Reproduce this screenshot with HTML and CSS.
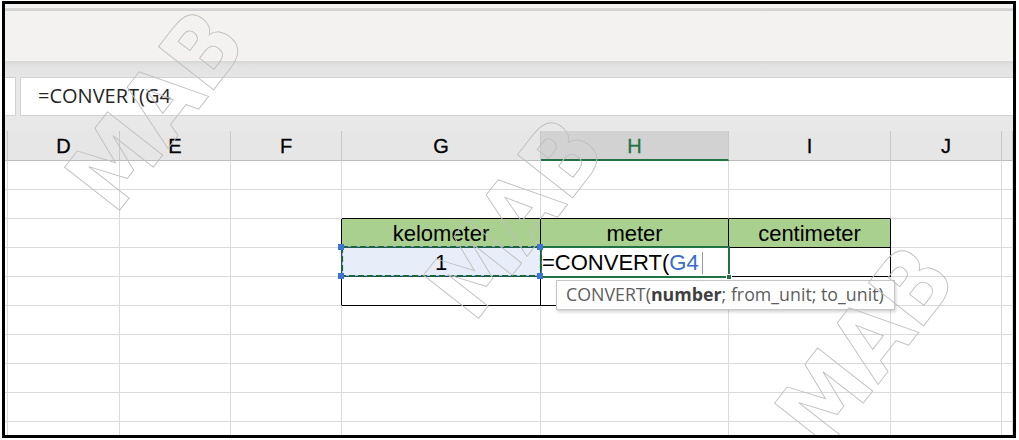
FILE: index.html
```html
<!DOCTYPE html>
<html>
<head>
<meta charset="utf-8">
<link rel="stylesheet" href="styles.css">
</head>
<body>
<div class="frame">
  <div class="ribbon"><div class="ribbon-rule"></div></div>
  <div class="band"></div>
  <div class="fbar">
    <div class="namebox"></div>
    <div class="finput">=CONVERT(G4</div>
  </div>
  <div class="gap"></div>
  <div class="grid">
    <div class="hd"></div><div class="hd">D</div><div class="hd">E</div><div class="hd">F</div><div class="hd">G</div><div class="hd on">H</div><div class="hd">I</div><div class="hd">J</div><div class="hd"></div>

    <div></div><div></div><div></div><div></div><div></div><div></div><div></div><div></div><div></div>

    <div></div><div></div><div></div><div></div><div class="tb"></div><div class="tb"></div><div class="tb"></div><div></div><div></div>

    <div></div><div></div><div></div><div class="tl"></div><div class="t th">kelometer</div><div class="t th">meter</div><div class="t th">centimeter</div><div></div><div></div>

    <div></div><div></div><div></div><div class="tl"></div>
    <div class="t c sel">1
      <svg class="ants" width="201" height="31" viewBox="0 0 201 31">
        <rect x="1" y="1" width="199" height="29" fill="none" stroke="#5b8bd9" stroke-width="1"/>
        <rect x="1" y="1" width="199" height="29" fill="none" stroke="#1b6638" stroke-width="2.2" stroke-dasharray="6 3"/>
      </svg>
      <span class="hdl h-tl"></span><span class="hdl h-tr"></span><span class="hdl h-bl"></span><span class="hdl h-br"></span>
    </div>
    <div class="t f act">=CONVERT(<span class="ref">G4</span><span class="caret"></span>
      <span class="act-box"></span><span class="fill"></span>
      <div class="tip">CONVERT(<b>number</b>; from_unit; to_unit)</div>
    </div>
    <div class="t"></div><div></div><div></div>

    <div></div><div></div><div></div><div class="tl"></div><div class="t"></div><div class="t"></div><div></div><div></div><div></div>

    <div></div><div></div><div></div><div></div><div></div><div></div><div></div><div></div><div></div>
    <div></div><div></div><div></div><div></div><div></div><div></div><div></div><div></div><div></div>
    <div></div><div></div><div></div><div></div><div></div><div></div><div></div><div></div><div></div>
    <div></div><div></div><div></div><div></div><div></div><div></div><div></div><div></div><div></div>
    <div></div><div></div><div></div><div></div><div></div><div></div><div></div><div></div><div></div>
  </div>

  <svg class="wm" width="1019" height="440" viewBox="0 0 1019 440">
    <text transform="translate(156 110) rotate(-52)">MAB</text>
    <text transform="translate(515 218) rotate(-52)">MAB</text>
    <text transform="translate(866 346) rotate(-52)">MAB</text>
  </svg>
</div>
</body>
</html>
```

FILE: styles.css
```css
* { box-sizing: border-box; }
body {
  margin: 0;
  background: #fff;
  font-family: "Liberation Sans", Arial, sans-serif;
}
.frame {
  position: relative;
  margin: 1px 0 0 2px;
  width: 1014px;
  height: 437px;
  border: 3px solid #000;
  overflow: hidden;
  background: #fff;
}
.ribbon {
  height: 57px;
  background: #f3f2f1;
  padding-top: 4px;
}
.ribbon-rule {
  height: 3px;
  background: linear-gradient(#dadada, #cfcfcf);
}
.band {
  height: 16px;
  background: linear-gradient(#d6d6d6, #e2e2e2 25%, #e6e6e6);
}
.fbar {
  height: 39px;
  display: flex;
  gap: 4px;
  background: #e8e8e8;
}
.namebox {
  width: 11px;
  background: #fff;
  border: 1px solid #d2d2d2;
  border-left: none;
}
.finput {
  flex: 1;
  background: #fff;
  border: 1px solid #d2d2d2;
  border-right: none;
  padding-left: 17px;
  font-family: "Segoe UI", "Open Sans", sans-serif;
  font-size: 20px;
  line-height: 36px;
  color: #262626;
}
.gap {
  height: 15px;
  background: #e8e8e8;
}
.grid {
  display: grid;
  grid-template-columns: 3px 112px 111px 111px 199px 188px 162px 111px 1fr;
  grid-template-rows: 30px;
  grid-auto-rows: 29px;
}
.grid > div {
  border-right: 1px solid #dadada;
  border-bottom: 1px solid #dadada;
  font-size: 22px;
  color: #000;
}
.grid > .hd {
  background: #e6e6e6;
  border-right-color: #c8c8c8;
  border-bottom-color: #bdbdbd;
  font-size: 20px;
  text-align: center;
  line-height: 29px;
  padding-top: 1px;
  -webkit-text-stroke: 0.3px currentColor;
}
.grid > .hd.on {
  background: #d2d2d2;
  color: #217346;
  border-bottom: 2px solid #217346;
}
.grid > .tb { border-bottom-color: #000; }
.grid > .tl { border-right-color: #000; }
.grid > .t {
  border-right-color: #000;
  border-bottom-color: #000;
}
.grid > .th {
  background: #a9d08e;
  text-align: center;
  line-height: 27px;
  padding-top: 1px;
}
.grid > .c {
  text-align: center;
  line-height: 27px;
  padding-top: 1px;
}
.grid > .sel {
  position: relative;
  background: #e8eef9;
  z-index: 3;
}
.ants {
  position: absolute;
  left: -1px;
  top: -2px;
}
.hdl {
  position: absolute;
  width: 6px;
  height: 6px;
  background: #3d74d2;
}
.h-tl { left: -4px; top: -4px; }
.h-tr { right: -3px; top: -4px; }
.h-bl { left: -4px; bottom: -3px; }
.h-br { right: -3px; bottom: -3px; }
.grid > .f {
  position: relative;
  padding-left: 1px;
  line-height: 27px;
  padding-top: 1px;
  white-space: nowrap;
  z-index: 2;
}
.ref { color: #3a6bc9; }
.caret {
  display: inline-block;
  width: 1px;
  height: 22px;
  background: #9a9a9a;
  margin-left: 3px;
  vertical-align: -4px;
}
.act-box {
  position: absolute;
  left: -1px;
  top: -2px;
  width: 190px;
  height: 32px;
  border: 2px solid #217346;
}
.fill {
  position: absolute;
  right: -4px;
  bottom: -4px;
  width: 6px;
  height: 6px;
  background: #217346;
  border: 1px solid #fff;
}
.tip {
  position: absolute;
  left: 15px;
  top: 32px;
  width: 339px;
  height: 30px;
  padding-left: 9px;
  background: #fff;
  border: 1px solid #c6c6c6;
  box-shadow: 1px 2px 3px rgba(0, 0, 0, 0.18);
  font-family: "Segoe UI", "Open Sans", sans-serif;
  font-size: 17.8px;
  line-height: 27px;
  color: #5e5e5e;
  white-space: nowrap;
}
.tip b { color: #3f3f3f; }
.wm {
  position: absolute;
  left: -5px;
  top: -4px;
  z-index: 10;
  pointer-events: none;
}
.wm text {
  font-family: "DejaVu Sans Condensed", "DejaVu Sans", sans-serif;
  font-weight: bold;
  font-size: 96px;
  fill: none;
  stroke: #c0c0c0;
  stroke-width: 0.9;
  text-anchor: middle;
  dominant-baseline: central;
}
```
